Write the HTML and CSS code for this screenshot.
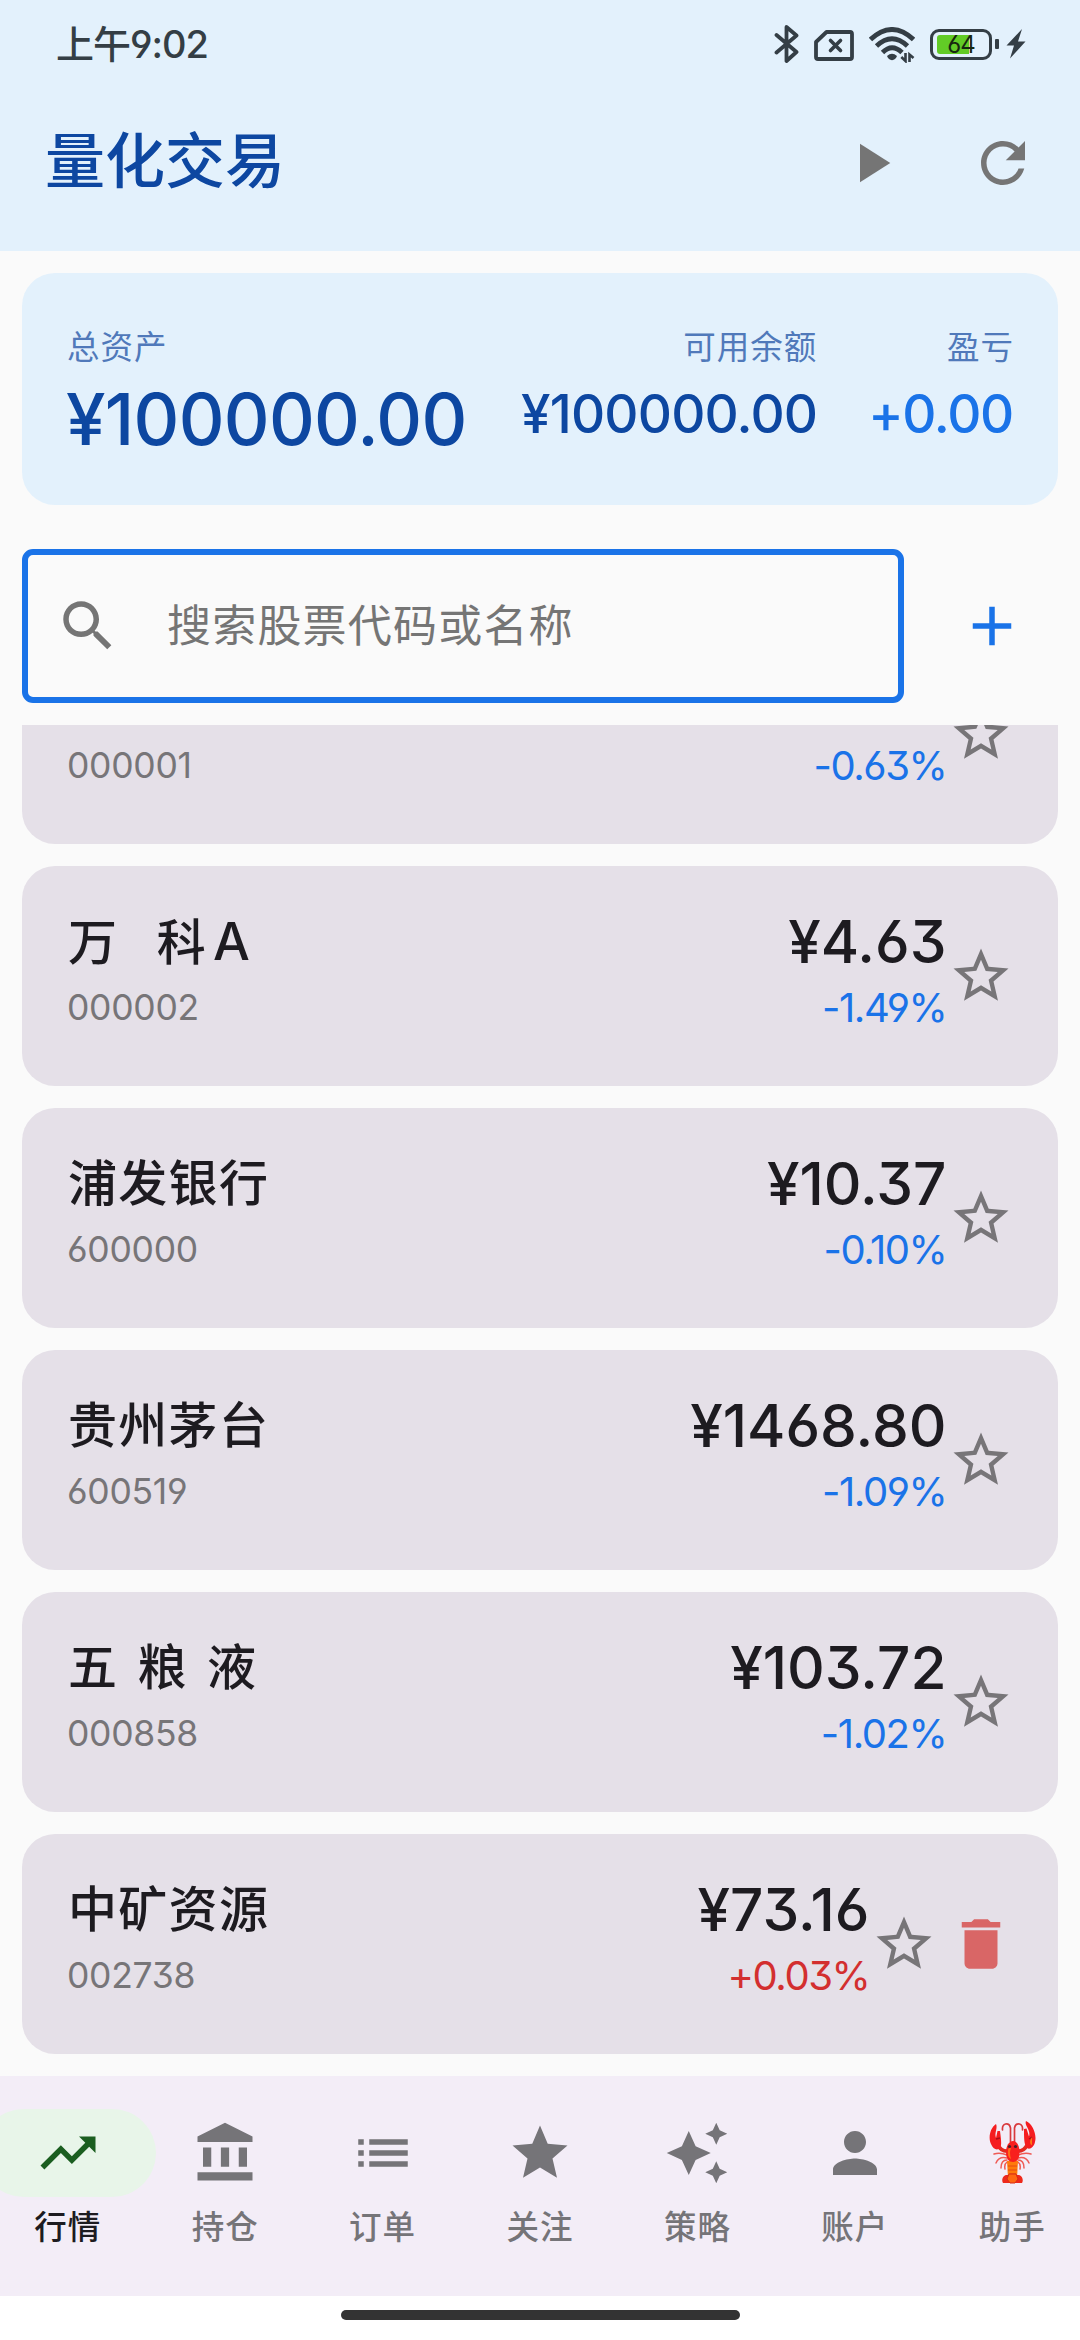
FILE: index.html
```html
<!DOCTYPE html>
<html lang="zh-CN">
<head>
<meta charset="utf-8">
<title>量化交易</title>
<link rel="stylesheet" href="styles.css">
</head>
<body>
<svg class="defs" width="0" height="0" aria-hidden="true">
  <symbol id="star-outline" viewBox="0 0 24 24"><path d="M22 9.24l-7.19-.62L12 2 9.19 8.63 2 9.24l5.46 4.73L5.82 21 12 17.27 18.18 21l-1.63-7.03L22 9.24zM12 15.4l-3.76 2.27 1-4.28-3.32-2.88 4.38-.38L12 6.1l1.71 4.04 4.38.38-3.32 2.88 1 4.28L12 15.4z"/></symbol>
</svg>

<div class="screen">
  <header class="top">
    <div class="status">
      <span class="clock">上午9:02</span>
      <div class="status-icons">
        <svg class="st-bt" width="26" height="40" viewBox="0 0 26 40"><path d="M2.5 11 22.5 28 12.5 37V3l10 8.5L2.5 28.500" fill="none" stroke="currentColor" stroke-width="3.800" stroke-linejoin="round" stroke-linecap="round"/></svg>
        <svg class="st-sim" width="40" height="31" viewBox="0 0 40 31"><path d="M12.500 2H36a2 2 0 0 1 2 2v23a2 2 0 0 1-2 2H4a2 2 0 0 1-2-2V12z" fill="none" stroke="currentColor" stroke-width="3.800" stroke-linejoin="round"/><path d="M16.500 10.500l10 10M26.500 10.500l-10 10" stroke="currentColor" stroke-width="3.600" stroke-linecap="round"/></svg>
        <svg class="st-wifi" width="46" height="36" viewBox="0 0 46 36"><g fill="none" stroke="currentColor" stroke-width="4.800"><path d="M1.500 12.500Q23-7.500 44.500 12.500"/><path d="M7.500 19Q23 4.500 38.500 19"/><path d="M13.500 25.500Q23 16 33 25.500"/></g><path d="M18 29q5-4.500 10 0-1.500 4-5 4.200-3.500-.2-5-4.200z" fill="currentColor"/><path d="M36.500 26v8l-4.200-4M40.500 35v-7.500l4 3.500" fill="none" stroke="currentColor" stroke-width="2.600"/></svg>
        <div class="battery"><span class="battery-level">64</span></div>
        <span class="battery-cap"></span>
        <svg class="st-bolt" width="20" height="30" viewBox="0 0 20 30"><path d="M16 0 .5 16.500h7.500L4 29.500 19.500 12.500h-7.500z" fill="currentColor"/></svg>
      </div>
    </div>
    <div class="appbar">
      <h1 class="title">量化交易</h1>
      <div class="actions">
        <button class="action" aria-label="运行"><svg class="icon" viewBox="0 0 24 24"><path d="M8 5v14l11-7z"/></svg></button>
        <button class="action" aria-label="刷新"><svg class="icon" viewBox="0 0 24 24"><path d="M17.650 6.350C16.200 4.900 14.210 4 12 4c-4.420 0-7.990 3.580-7.990 8s3.570 8 7.990 8c3.730 0 6.840-2.550 7.730-6h-2.080c-.82 2.330-3.040 4-5.650 4-3.310 0-6-2.690-6-6s2.690-6 6-6c1.660 0 3.140.69 4.220 1.780L13 11h7V4l-2.350 2.350z"/></svg></button>
      </div>
    </div>
  </header>

  <section class="assets">
    <div class="asset total"><span class="label">总资产</span><span class="amount">¥100000.00</span></div>
    <div class="asset balance"><span class="label">可用余额</span><span class="amount">¥100000.00</span></div>
    <div class="asset profit"><span class="label">盈亏</span><span class="amount">+0.00</span></div>
  </section>

  <div class="search-row">
    <div class="search"><svg class="icon" viewBox="0 0 24 24"><path d="M15.500 14h-.79l-.28-.27C15.410 12.590 16 11.110 16 9.500 16 5.910 13.090 3 9.500 3S3 5.910 3 9.500 5.910 16 9.500 16c1.610 0 3.090-.59 4.230-1.570l.27.28v.79l5 4.990L20.490 19l-4.990-5zm-6 0C7.010 14 5 11.990 5 9.500S7.010 5 9.500 5 14 7.010 14 9.500 11.990 14 9.500 14z"/></svg><span class="placeholder">搜索股票代码或名称</span></div>
    <button class="add" aria-label="添加"><svg class="icon" viewBox="0 0 24 24"><path d="M19 13h-6v6h-2v-6H5v-2h6V5h2v6h6v2z"/></svg></button>
  </div>

  <main class="list">
    <article class="stock">
      <div class="info"><span class="name"></span><span class="code">000001</span></div>
      <div class="quote"><span class="price"></span><span class="change down">-0.63%</span></div>
      <svg class="icon"><use href="#star-outline"/></svg>
    </article>
    <article class="stock">
      <div class="info"><span class="name">万  科<span class="suffix">A</span></span><span class="code">000002</span></div>
      <div class="quote"><span class="price">¥4.63</span><span class="change down">-1.49%</span></div>
      <svg class="icon"><use href="#star-outline"/></svg>
    </article>
    <article class="stock">
      <div class="info"><span class="name">浦发银行</span><span class="code">600000</span></div>
      <div class="quote"><span class="price">¥10.37</span><span class="change down">-0.10%</span></div>
      <svg class="icon"><use href="#star-outline"/></svg>
    </article>
    <article class="stock">
      <div class="info"><span class="name">贵州茅台</span><span class="code">600519</span></div>
      <div class="quote"><span class="price">¥1468.80</span><span class="change down">-1.09%</span></div>
      <svg class="icon"><use href="#star-outline"/></svg>
    </article>
    <article class="stock">
      <div class="info"><span class="name">五 粮 液</span><span class="code">000858</span></div>
      <div class="quote"><span class="price">¥103.72</span><span class="change down">-1.02%</span></div>
      <svg class="icon"><use href="#star-outline"/></svg>
    </article>
    <article class="stock">
      <div class="info"><span class="name">中矿资源</span><span class="code">002738</span></div>
      <div class="quote"><span class="price">¥73.16</span><span class="change up">+0.03%</span></div>
      <svg class="icon"><use href="#star-outline"/></svg>
      <svg class="icon delete" viewBox="0 0 24 24"><path d="M6 19c0 1.100.9 2 2 2h8c1.100 0 2-.9 2-2V7H6v12zM19 4h-3.500l-1-1h-5l-1 1H5v2h14V4z"/></svg>
    </article>
  </main>

  <nav class="nav">
    <a class="tab active"><span class="pill"><svg class="icon" viewBox="0 0 24 24"><path d="M16 6l2.290 2.290-4.880 4.880-4-4L2 16.590 3.410 18l6-6 4 4 6.300-6.290L22 12V6z"/></svg></span><span class="tab-label">行情</span></a>
    <a class="tab"><span class="pill"><svg class="icon" viewBox="0 0 24 24"><path d="M4 10h3v7H4zM10.500 10h3v7h-3zM2 19h20v3H2zM17 10h3v7h-3zM12 1L2 6v2h20V6z"/></svg></span><span class="tab-label">持仓</span></a>
    <a class="tab"><span class="pill"><svg class="icon" viewBox="0 0 24 24"><path d="M3 13h2v-2H3v2zm0 4h2v-2H3v2zm0-8h2V7H3v2zm4 4h14v-2H7v2zm0 4h14v-2H7v2zM7 7v2h14V7H7z"/></svg></span><span class="tab-label">订单</span></a>
    <a class="tab"><span class="pill"><svg class="icon" viewBox="0 0 24 24"><path d="M12 17.270L18.180 21l-1.640-7.030L22 9.240l-7.190-.61L12 2 9.190 8.630 2 9.240l5.460 4.730L5.820 21z"/></svg></span><span class="tab-label">关注</span></a>
    <a class="tab"><span class="pill"><svg class="icon" viewBox="0 0 24 24"><path d="M19 9l1.250-2.750L23 5l-2.750-1.250L19 1l-1.250 2.750L15 5l2.750 1.250L19 9zm-7.500.5L9 4 6.500 9.500 1 12l5.500 2.500L9 20l2.500-5.500L17 12l-5.500-2.500zM19 15l-1.250 2.750L15 19l2.750 1.250L19 23l1.250-2.750L23 19l-2.750-1.250L19 15z"/></svg></span><span class="tab-label">策略</span></a>
    <a class="tab"><span class="pill"><svg class="icon" viewBox="0 0 24 24"><path d="M12 12c2.210 0 4-1.790 4-4s-1.790-4-4-4-4 1.790-4 4 1.790 4 4 4zm0 2c-2.670 0-8 1.340-8 4v2h16v-2c0-2.660-5.330-4-8-4z"/></svg></span><span class="tab-label">账户</span></a>
    <a class="tab"><span class="pill"><svg class="icon" viewBox="0 0 66 66">
      <g fill="none" stroke="#d9393c" stroke-width="1.700" stroke-linecap="round"><path d="M31.500 22V8q-1-5-5-4-3.500 1-3 6M35.500 22V8q1-5 5-4 3.500 1 3 6"/><g stroke="#ef5b55" stroke-width="1.500"><path d="M28 35q-7-3-13-1M28 38q-8-2-11 5M28 40q-6 0-6 8M28 42q-3 2-2 7M39 35q7-3 13-1M39 38q8-2 11 5M39 40q6 0 6 8M39 42q3 2 2 7"/></g></g>
      <path d="M30 31q-8 1-11-6M37 31q8 1 11-6" fill="none" stroke="#e32a20" stroke-width="3.600"/>
      <path d="M17 4c-6 4-8 14-5 20 2 5 6 7 9 4 2-3 1-9 0-17l-2.500 0-1.500 7c-2-5 2-10 0-14zM47 1c7 3 11 14 9 21-1 5-5 8-8 6-3-3-3-10-3-19l2.500-.500 2.500 8c2-7-5-11-3-15.500z" fill="#f51d20"/>
      <path d="M17 19l4-1M50 19l3-2" stroke="#a81018" stroke-width="1.400"/><path d="M51 21l2-4v8q-2 0-2-4z" fill="#ff7812"/>
      <path d="M28 41h11l-1 17h-9z" fill="#ff7a0b"/><path d="M29 46h9M29 50h9M30 54h7" stroke="#e64a12" stroke-width="1"/>
      <path d="M29 55c-5-1-7 5-5 8h9l1-7zM38 55c5-1 7 5 5 8h-8l-1-7z" fill="#ee291c"/><path d="M30 54h7l2 5-3 4h-5l-3-4z" fill="#ff6812" stroke="#d82b16" stroke-width="1"/>
      <path d="M34 21c-4 0-7 5-7 11 0 7 3 10 7 10s6.500-3 6.500-10c0-6-2.500-11-6.500-11z" fill="#f81f1e"/><path d="M29 30q1-3 3-2-2 5 0 11-4-2-3-9z" fill="#ff6b18"/>
      <circle cx="30.500" cy="26.500" r="1.600" fill="#48212a"/><circle cx="36.500" cy="26.500" r="1.600" fill="#48212a"/>
    </svg></span><span class="tab-label">助手</span></a>
  </nav>
  <footer class="gesture"><span class="handle"></span></footer>
</div>
</body>
</html>
```
FILE: styles.css
```css
* { box-sizing: border-box; }

body {
  margin: 0;
  background: #fafafa;
  color: #1d1b20;
  font-family: Inter, "Noto Sans CJK SC", sans-serif;
  font-feature-settings: "cv03", "cv04", "cv09";
}

.defs { display: block; position: absolute; }

.screen {
  display: flex;
  flex-direction: column;
  width: 1080px;
  height: 2340px;
  overflow: hidden;
}

button {
  display: flex;
  align-items: center;
  justify-content: center;
  padding: 0;
  border: 0;
  background: none;
  color: inherit;
}

.icon {
  display: block;
  flex: none;
  width: 66px;
  height: 66px;
  fill: currentColor;
}

/* Status bar and app bar */
.top {
  flex: none;
  height: 251px;
  background: #e3f1fc;
}

.status {
  display: flex;
  justify-content: space-between;
  height: 88px;
  padding: 0 54px 0 56px;
  color: #343e45;
}

.clock {
  font-size: 38px;
  font-weight: 500;
  line-height: 89px;
  letter-spacing: -1px;
}

.status-icons {
  display: flex;
  align-items: center;
  height: 88px;
}

.st-bt { margin-right: 14px; }
.st-sim { margin: 3px 15px 0 0; }
.st-wifi { margin: 2px 15px 0 0; }

.battery {
  width: 62px;
  height: 31px;
  padding: 3px 4px;
  border: 3px solid #343e45;
  border-radius: 9px;
}

.battery-level {
  display: block;
  width: 48px;
  height: 19px;
  border-radius: 3px;
  background: linear-gradient(90deg, #62cb26 32px, transparent 32px);
  color: #17280f;
  font-size: 24px;
  line-height: 20px;
  letter-spacing: -1px;
  text-align: center;
}

.battery-cap {
  width: 4px;
  height: 10px;
  margin: 0 7px 0 3px;
  border-radius: 1px;
  background: #343e45;
}

.appbar {
  display: flex;
  justify-content: space-between;
  align-items: flex-start;
  padding: 9px 11px 0 45px;
}

.title {
  margin: 0;
  color: #0d47a1;
  font-size: 60px;
  font-weight: 500;
  line-height: 128px;
}

.actions { display: flex; color: #757575; }
.action { width: 132px; height: 132px; }

/* Asset summary */
.assets {
  display: flex;
  flex: none;
  height: 232px;
  margin: 22px 22px 0;
  padding: 51px 44px 0 45px;
  border-radius: 33px;
  background: #e3f1fc;
  color: #0d47a1;
}

.asset { display: flex; flex-direction: column; }
.asset .label {
  color: #5079ba;
  font-size: 32.500px;
  line-height: 48px;
  letter-spacing: 1px;
}
.asset .amount { font-weight: 500; }
.total .amount { margin-left: -1px; font-size: 71px; line-height: 94px; letter-spacing: -.7px; }
.balance { margin-left: auto; text-align: right; }
.profit { margin-left: 51px; text-align: right; }
.balance .amount, .profit .amount {
  font-size: 53px;
  line-height: 84px;
  letter-spacing: -.8px;
}
.profit .amount { color: #1a73e8; letter-spacing: -1.300px; margin-right: 1px; }

/* Search */
.search-row {
  display: flex;
  flex: none;
  align-items: center;
  margin-top: 44px;
  padding: 0 22px;
}

.search {
  display: flex;
  align-items: center;
  width: 882px;
  height: 154px;
  padding: 0 27px;
  border: 6px solid #1a73e8;
  border-radius: 11px;
  color: #757575;
}

.placeholder {
  margin-left: 46px;
  padding-bottom: 7px;
  font-size: 44px;
  letter-spacing: 1.200px;
}

.add { width: 132px; height: 132px; margin-left: 22px; color: #1a73e8; }

/* Stock list, scrolled under the search row */
.list {
  display: flex;
  flex: none;
  flex-direction: column;
  justify-content: flex-end;
  gap: 22px;
  height: 1351px;
  margin-top: 22px;
  padding: 0 22px 22px;
  overflow: hidden;
}

.stock {
  display: flex;
  flex: none;
  align-items: center;
  gap: 11px;
  height: 220px;
  padding: 0 44px 0 46px;
  border-radius: 33px;
  background: #e5e0e8;
  color: #777578;
}

.info, .quote {
  display: flex;
  flex-direction: column;
  align-self: flex-start;
  padding-top: 44px;
}

.info { flex: 1; }
.quote { align-items: flex-end; margin-right: -9.500px; }

.name {
  height: 63px;
  color: #1d1b20;
  font-size: 49px;
  font-weight: 500;
  line-height: 63px;
  letter-spacing: 1.300px;
  word-spacing: 4.800px;
  white-space: pre;
}

.suffix { margin-left: 6px; font-size: 52px; }

.code {
  margin: 15px 0 0 -1px;
  font-size: 35.500px;
  line-height: 40px;
  letter-spacing: -.3px;
}

.price {
  height: 64px;
  color: #1d1b20;
  font-size: 58.500px;
  font-weight: 500;
  line-height: 64px;
}

.change {
  margin-top: 12px;
  font-size: 40px;
  line-height: 44px;
  letter-spacing: -1.400px;
}

.down { color: #1a73e8; }
.up { color: #d32f2f; }
.delete { color: #d96666; }

/* Bottom navigation */
.nav {
  display: flex;
  flex: none;
  gap: 22px;
  height: 220px;
  padding-top: 33px;
  background: #f3edf7;
  color: #757478;
}

.tab {
  display: flex;
  flex: 1 1 0;
  flex-direction: column;
  align-items: center;
  min-width: 0;
}

.pill {
  display: flex;
  flex: none;
  align-items: center;
  justify-content: center;
  width: 176px;
  height: 88px;
  border-radius: 44px;
}

.active .pill { background: #e8f5e9; color: #1b5e20; }
.active .tab-label { color: #1d1b20; }

.tab-label {
  margin-top: 9px;
  font-size: 32.500px;
  font-weight: 500;
  line-height: 44px;
  letter-spacing: 1px;
}

.gesture {
  display: flex;
  flex: 1;
  align-items: flex-start;
  justify-content: center;
  padding-top: 14px;
  background: #fff;
}

.handle {
  width: 399px;
  height: 10px;
  border-radius: 5px;
  background: #333;
}
```
